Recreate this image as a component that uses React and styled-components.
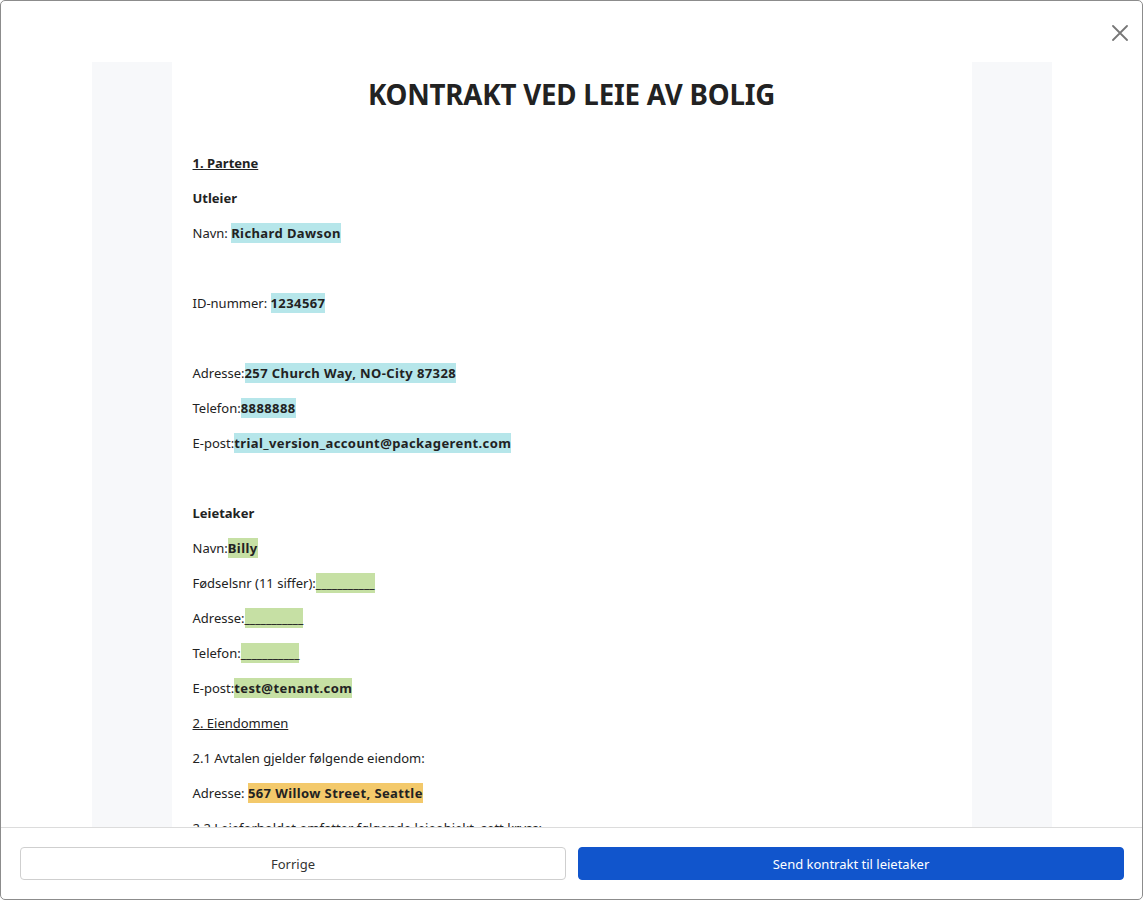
import styled, { createGlobalStyle } from "styled-components";

const GlobalStyle = createGlobalStyle`
  html, body {
    margin: 0;
    padding: 0;
    height: 100%;
    background: #ffffff;
  }
  * {
    box-sizing: border-box;
  }
`;

const Frame = styled.div`
  height: 100vh;
  display: flex;
  flex-direction: column;
  border: 1px solid #8c8c8c;
  border-radius: 5px;
  background: #ffffff;
  overflow: hidden;
  font-family: "Noto Sans", "Open Sans", Arial, sans-serif;
  color: #222222;
`;

const Header = styled.div`
  height: 61px;
  flex-shrink: 0;
  display: flex;
  justify-content: flex-end;
  align-items: flex-start;
  padding: 23px 13px 0 0;
`;

const CloseButton = styled.button`
  border: none;
  background: transparent;
  padding: 0;
  width: 18px;
  height: 18px;
  display: flex;
  align-items: center;
  justify-content: center;
  cursor: pointer;
  color: #777777;
`;

const Body = styled.div`
  flex: 1;
  overflow: hidden;
  padding: 0 90px;
`;

const Sheet = styled.div`
  max-width: 960px;
  margin: 0 auto;
  background: #f7f8fa;
  padding: 0 80px;
  min-height: 100%;
`;

const Page = styled.div`
  background: #ffffff;
  padding: 13px 21px 40px;
  min-height: 100%;
`;

const Title = styled.h1`
  margin: 0 0 40px;
  text-align: center;
  font-size: 27.7px;
  line-height: 38px;
  font-weight: 700;
  color: #222222;
  letter-spacing: -0.2px;
`;

const Para = styled.p`
  margin: 0 0 15px;
  font-size: 13px;
  line-height: 20px;
  min-height: 20px;
  font-weight: ${(p) => (p.$bold ? 700 : 400)};
  text-decoration: ${(p) => (p.$underline ? "underline" : "none")};
  color: #222222;
`;

const Field = styled.span`
  font-weight: 700;
  background: ${(p) => p.$bg};
  padding: 1px 0;
  letter-spacing: ${(p) => (p.$blank ? "0" : "0.4px")};
`;

const Footer = styled.div`
  flex-shrink: 0;
  border-top: 1px solid #dcdcdc;
  padding: 19px 18px 19px 19px;
  display: grid;
  grid-template-columns: 1fr 1fr;
  gap: 12px;
`;

const Button = styled.button`
  height: 33px;
  border-radius: 4px;
  font-family: "Noto Sans", "Open Sans", Arial, sans-serif;
  font-size: 13px;
  cursor: pointer;
  border: 1px solid ${(p) => (p.$primary ? "#1155cc" : "#cfcfcf")};
  background: ${(p) => (p.$primary ? "#1155cc" : "#ffffff")};
  color: ${(p) => (p.$primary ? "#ffffff" : "#333333")};
`;

const landlord = "#b6e6ea";
const tenant = "#c6e0a4";
const property = "#f3c96b";
const blank = "___________";

function App() {
  return (
    <>
      <GlobalStyle />
      <Frame>
        <Header>
          <CloseButton aria-label="Lukk">
            <svg width="16" height="16" viewBox="0 0 16 16">
              <path
                d="M1 1 L15 15 M15 1 L1 15"
                stroke="currentColor"
                strokeWidth="1.8"
                strokeLinecap="round"
              />
            </svg>
          </CloseButton>
        </Header>
        <Body>
          <Sheet>
            <Page>
              <Title>KONTRAKT VED LEIE AV BOLIG</Title>
              <Para $bold $underline>1. Partene</Para>
              <Para $bold>Utleier</Para>
              <Para>
                Navn: <Field $bg={landlord}>Richard Dawson</Field>
              </Para>
              <Para />
              <Para>
                ID-nummer: <Field $bg={landlord}>1234567</Field>
              </Para>
              <Para />
              <Para>
                Adresse:<Field $bg={landlord}>257 Church Way, NO-City 87328</Field>
              </Para>
              <Para>
                Telefon:<Field $bg={landlord}>8888888</Field>
              </Para>
              <Para>
                E-post:<Field $bg={landlord}>trial_version_account@packagerent.com</Field>
              </Para>
              <Para />
              <Para $bold>Leietaker</Para>
              <Para>
                Navn:<Field $bg={tenant}>Billy</Field>
              </Para>
              <Para>
                Fødselsnr (11 siffer):<Field $bg={tenant} $blank>{blank}</Field>
              </Para>
              <Para>
                Adresse:<Field $bg={tenant} $blank>{blank}</Field>
              </Para>
              <Para>
                Telefon:<Field $bg={tenant} $blank>{blank}</Field>
              </Para>
              <Para>
                E-post:<Field $bg={tenant}>test@tenant.com</Field>
              </Para>
              <Para $underline>2. Eiendommen</Para>
              <Para>2.1 Avtalen gjelder følgende eiendom:</Para>
              <Para>
                Adresse: <Field $bg={property}>567 Willow Street, Seattle</Field>
              </Para>
              <Para>2.2 Leieforholdet omfatter følgende leieobjekt, sett kryss:</Para>
              <Para>Bolig</Para>
            </Page>
          </Sheet>
        </Body>
        <Footer>
          <Button>Forrige</Button>
          <Button $primary>Send kontrakt til leietaker</Button>
        </Footer>
      </Frame>
    </>
  );
}

export default App;
